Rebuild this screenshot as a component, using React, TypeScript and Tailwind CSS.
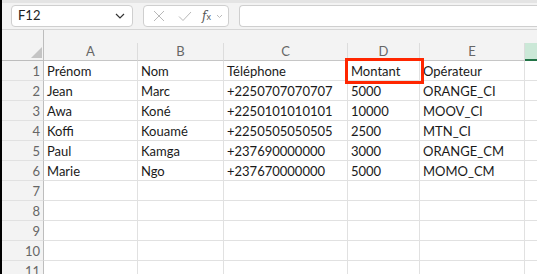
import React from "react";

const rows: string[][] = [
  ["Prénom", "Nom", "Téléphone", "Montant", "Opérateur"],
  ["Jean", "Marc", "+2250707070707", "5000", "ORANGE_CI"],
  ["Awa", "Koné", "+2250101010101", "10000", "MOOV_CI"],
  ["Koffi", "Kouamé", "+2250505050505", "2500", "MTN_CI"],
  ["Paul", "Kamga", "+237690000000", "3000", "ORANGE_CM"],
  ["Marie", "Ngo", "+237670000000", "5000", "MOMO_CM"],
  ["", "", "", "", ""],
  ["", "", "", "", ""],
  ["", "", "", "", ""],
  ["", "", "", "", ""],
  ["", "", "", "", ""],
];

const letters = ["A", "B", "C", "D", "E"];

export default function App() {
  return (
    <div
      className="relative w-[537px] h-[274px] overflow-hidden bg-white border-l-2 border-black text-[#1a1a1a]"
      style={{ fontFamily: "Lato, 'Open Sans', sans-serif" }}
    >
      {/* toolbar */}
      <div className="h-[3px] bg-[#e4e4e4]" />
      <div className="h-[27px] bg-[#f3f3f3] border-b border-[#d6d6d6] flex items-start pt-[2px] pl-[9px] gap-[10px]">
        <div className="w-[122px] h-[22px] bg-white border border-[#cfcfcf] rounded-[4px] flex items-center justify-between pl-[6px] pr-[7px]">
          <span className="text-[13px] text-[#222]">F12</span>
          <svg width="10" height="6" viewBox="0 0 10 6">
            <path d="M1 1 L5 5 L9 1" fill="none" stroke="#333" strokeWidth="1.2" />
          </svg>
        </div>
        <div className="w-[86px] h-[22px] bg-white border border-[#cfcfcf] rounded-[4px] flex items-center pl-[9px]">
          <svg width="12" height="12" viewBox="0 0 12 12" className="mr-[13px]">
            <path d="M1 1 L11 11 M11 1 L1 11" stroke="#b8b8b8" strokeWidth="1" fill="none" />
          </svg>
          <svg width="14" height="11" viewBox="0 0 14 11" className="mr-[10px]">
            <path d="M1 5.5 L5 9.5 L13 1" stroke="#b8b8b8" strokeWidth="1" fill="none" />
          </svg>
          <span className="text-[12px] italic text-[#555] leading-none" style={{ fontFamily: "'DejaVu Serif', serif" }}>
            f<span className="text-[9px] not-italic" style={{ fontFamily: "Lato, sans-serif" }}>x</span>
          </span>
          <svg width="7" height="5" viewBox="0 0 7 5" className="ml-[5px]">
            <path d="M1 1 L3.5 3.5 L6 1" fill="none" stroke="#bbb" strokeWidth="1" />
          </svg>
        </div>
        <div className="flex-1 h-[22px] bg-white border border-[#cfcfcf] border-r-0 rounded-l-[4px]" />
      </div>

      {/* sheet */}
      <div className="grid grid-cols-[42px_94px_86px_124px_72px_105px_1fr]">
        <div className="h-[13px] bg-[#f3f3f3] border-r border-[#bdbdbd]" />
        <div className="col-span-6 h-[13px] bg-[#f3f3f3]" />
        <div className="h-[18px] bg-[#f3f3f3] border-r border-b border-[#bdbdbd] flex items-end justify-end pr-[1px] pb-[2px]">
          <svg width="11" height="11" viewBox="0 0 11 11">
            <path d="M11 0 L11 11 L0 11 Z" fill="#c4c4c4" />
          </svg>
        </div>
        {letters.map((l) => (
          <div
            key={l}
            className="h-[18px] bg-[#f3f3f3] border-r border-[#dcdcdc] border-b border-b-[#c6c6c6] flex items-center justify-center text-[13px] text-[#666]"
          >
            {l}
          </div>
        ))}
        <div className="h-[18px] bg-[#cbe8d7] border-b-2 border-[#217346]" />

        {rows.map((r, i) => (
          <React.Fragment key={i}>
            <div className="h-[20px] bg-[#f3f3f3] border-r border-[#bdbdbd] border-b border-b-[#e1e1e1] flex items-center justify-end pt-[3px] pr-[3px] text-[13px] text-[#666]">
              {i + 1}
            </div>
            {r.map((c, j) => (
              <div
                key={j}
                className="h-[20px] border-r border-b border-[#e1e1e1] flex items-center pt-[3px] pl-[3px] text-[13px] whitespace-nowrap overflow-hidden"
              >
                {c}
              </div>
            ))}
            <div className="h-[20px] border-b border-[#e1e1e1]" />
          </React.Fragment>
        ))}
      </div>

      <div className="absolute left-[343px] top-[58px] w-[79px] h-[26px] border-[3px] border-[#ff2600]" />
    </div>
  );
}
